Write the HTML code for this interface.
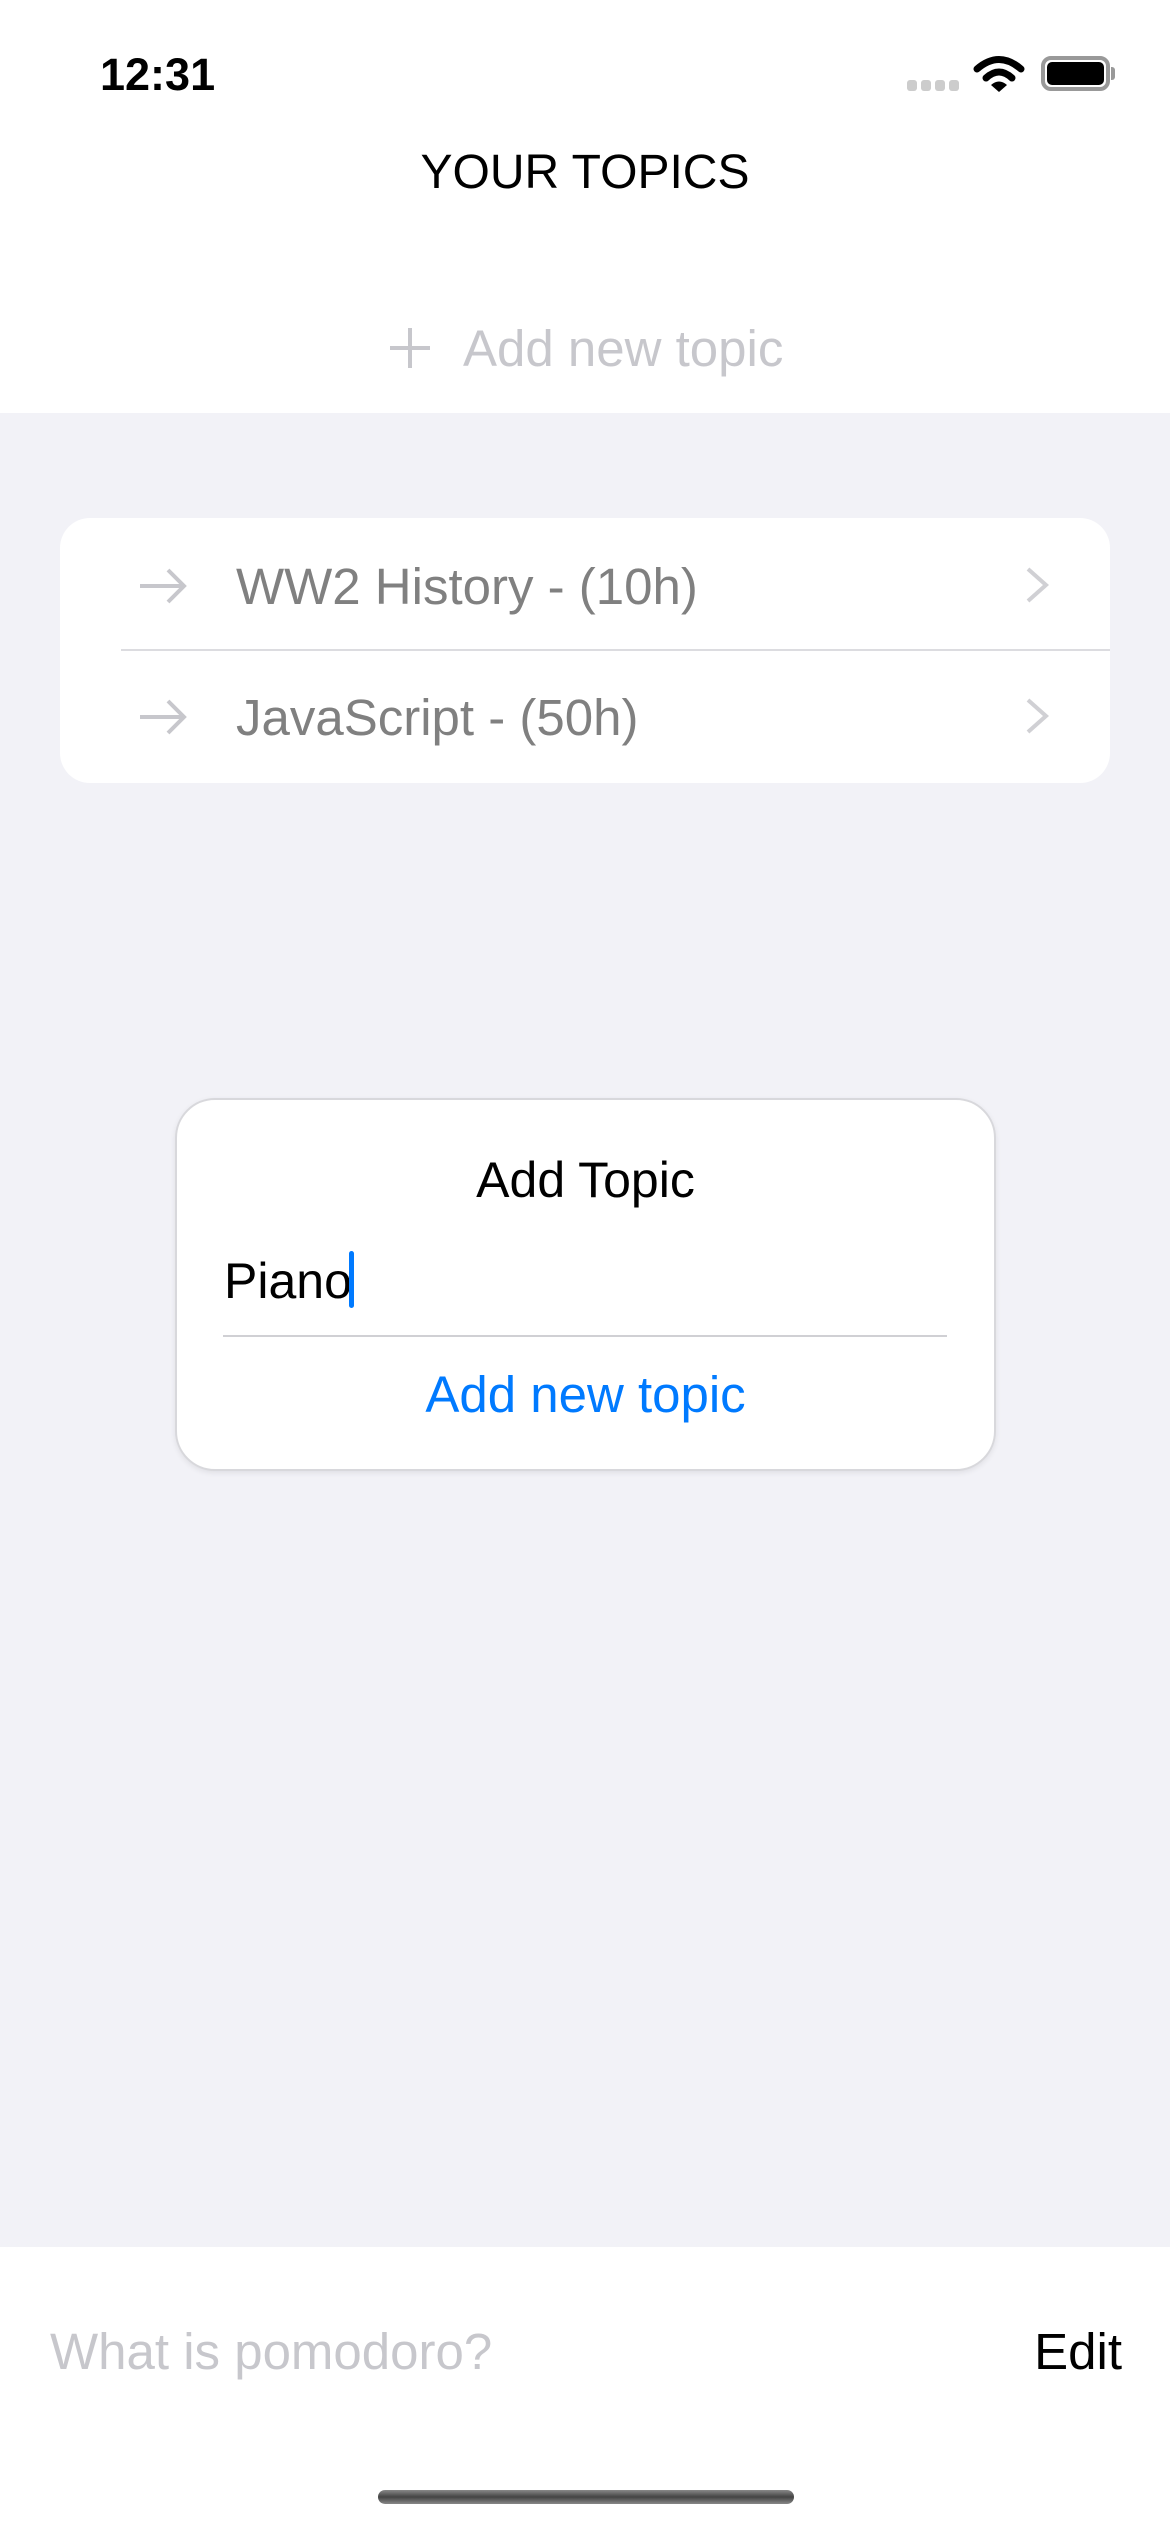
<!DOCTYPE html>
<html><head><meta charset="utf-8"><style>
*{margin:0;padding:0;box-sizing:border-box}
body{width:1170px;height:2532px;position:relative;background:#f2f2f7;font-family:"Liberation Sans",sans-serif;overflow:hidden}
.abs{position:absolute}
.t{position:absolute;white-space:nowrap;line-height:1}
</style></head><body>
<div class="abs" style="left:0;top:0;width:1170px;height:413px;background:#fff"></div>
<div class="t" style="left:100px;top:52px;font-size:45px;font-weight:bold;color:#000">12:31</div>
<div class="abs" style="left:907px;top:80px;width:10px;height:11px;border-radius:3px;background:#ccc"></div>
<div class="abs" style="left:921px;top:80px;width:10px;height:11px;border-radius:3px;background:#ccc"></div>
<div class="abs" style="left:935px;top:80px;width:10px;height:11px;border-radius:3px;background:#ccc"></div>
<div class="abs" style="left:949px;top:80px;width:10px;height:11px;border-radius:3px;background:#ccc"></div>
<svg class="abs" style="left:973px;top:54px" width="52" height="40" viewBox="0 0 52 40"><path d="M4 15 Q26 -4 48 15" stroke="#000" stroke-width="7" fill="none" stroke-linecap="round"/><path d="M13 24 Q26 12 39 24" stroke="#000" stroke-width="7" fill="none" stroke-linecap="round"/><path d="M18 31 L26 38 L34 31 Q26 24 18 31Z" fill="#000"/></svg>
<div class="abs" style="left:1041px;top:56px;width:69px;height:35px;border:4px solid #999;border-radius:10px"></div>
<div class="abs" style="left:1047px;top:62px;width:57px;height:23px;border-radius:5px;background:#000"></div>
<div class="abs" style="left:1111px;top:67px;width:4px;height:13px;border-radius:0 3px 3px 0;background:#999"></div>
<div class="t" style="left:0;width:1170px;text-align:center;top:149px;font-size:48px;color:#000">YOUR TOPICS</div>
<svg class="abs" style="left:388px;top:326px" width="44" height="44"><path d="M22 2V42M2 22H42" stroke="#c7c7cc" stroke-width="4"/></svg>
<div class="t" style="left:463px;top:323px;font-size:51px;color:#c7c7cc">Add new topic</div>

<div class="abs" style="left:60px;top:518px;width:1050px;height:265px;background:#fff;border-radius:30px"></div>
<div class="abs" style="left:121px;top:649px;width:989px;height:2px;background:#dcdce0"></div>
<svg class="abs" style="left:138px;top:566px" width="50" height="40"><path d="M2 20H46M30 4L46 20L30 36" stroke="#c7c7cc" stroke-width="4" fill="none"/></svg>
<svg class="abs" style="left:138px;top:697px" width="50" height="40"><path d="M2 20H46M30 4L46 20L30 36" stroke="#c7c7cc" stroke-width="4" fill="none"/></svg>
<div class="t" style="left:236px;top:561px;font-size:51px;color:#808080">WW2 History - (10h)</div>
<div class="t" style="left:236px;top:692px;font-size:51px;color:#808080">JavaScript - (50h)</div>
<svg class="abs" style="left:1024px;top:566px" width="28" height="38"><path d="M4 3L22 19L4 35" stroke="#d0d0d4" stroke-width="4" fill="none"/></svg>
<svg class="abs" style="left:1024px;top:697px" width="28" height="38"><path d="M4 3L22 19L4 35" stroke="#d0d0d4" stroke-width="4" fill="none"/></svg>

<div class="abs" style="left:175px;top:1098px;width:821px;height:373px;background:#fff;border-radius:40px;border:2px solid #d8d8dc;box-shadow:0 2px 6px rgba(0,0,0,0.08)"></div>
<div class="t" style="left:175px;width:821px;text-align:center;top:1155px;font-size:50px;color:#000">Add Topic</div>
<div class="t" style="left:224px;top:1256px;font-size:50px;color:#000">Piano</div>
<div class="abs" style="left:349px;top:1251px;width:5px;height:57px;border-radius:3px;background:#007aff"></div>
<div class="abs" style="left:223px;top:1335px;width:724px;height:2px;background:#d0d0d4"></div>
<div class="t" style="left:175px;width:821px;text-align:center;top:1369px;font-size:51px;color:#007aff">Add new topic</div>

<div class="abs" style="left:0;top:2247px;width:1170px;height:285px;background:#fff"></div>
<div class="t" style="left:50px;top:2326px;font-size:51px;color:#c7c7cc">What is pomodoro?</div>
<div class="t" style="right:48px;top:2326px;font-size:51px;color:#000">Edit</div>
<div class="abs" style="left:378px;top:2490px;width:416px;height:14px;border-radius:7px;background:linear-gradient(#888,#444 50%,#888)"></div>
</body></html>
